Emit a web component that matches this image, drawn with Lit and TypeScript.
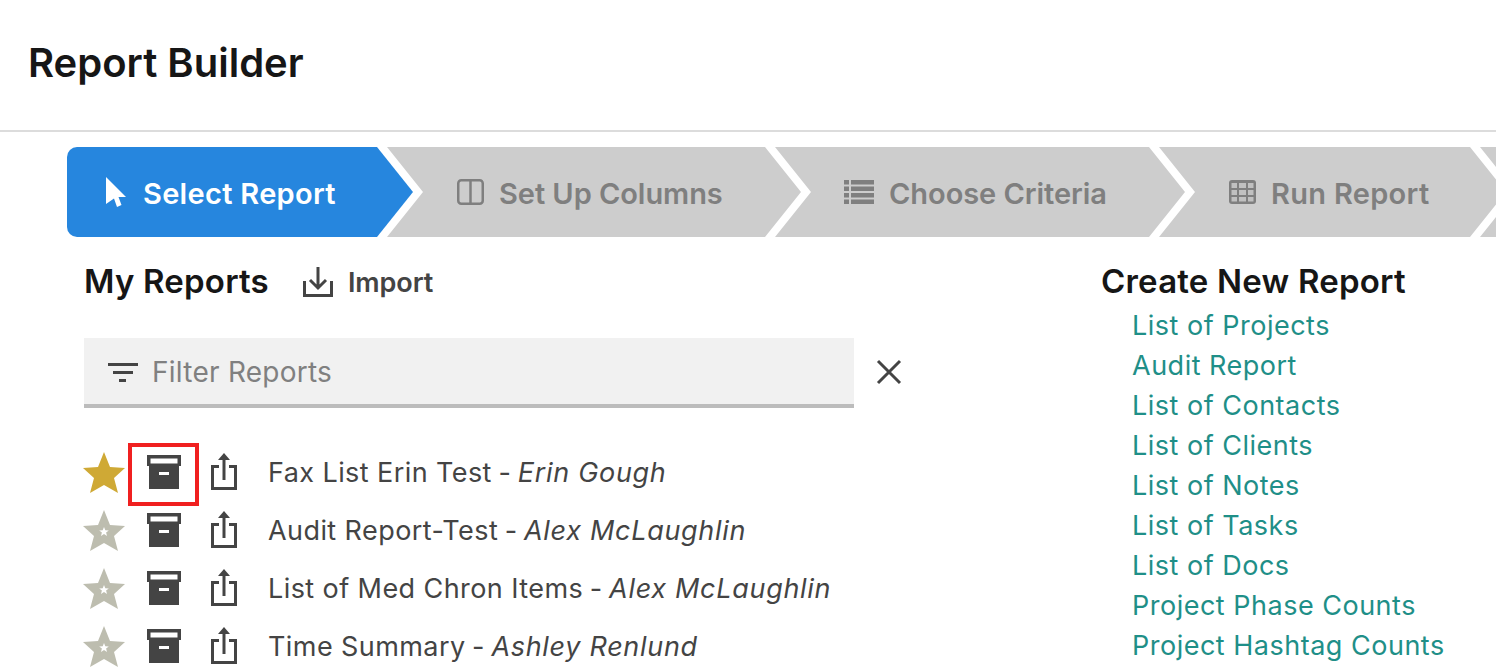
import { LitElement, html, css, svg } from "lit";
import { customElement } from "lit/decorators.js";

const STAR = "M21 0 L27 15 L42 16 L31 26 L35 41 L21 33 L7 41 L11 26 L0 16 L15 15 Z";

const star = (on: boolean) => html`<svg class="star" width="42" height="42" viewBox="0 0 42 42">
  <path d=${STAR} fill=${on ? "#cfa935" : "#bdbdaf"}></path>
  ${on ? null : svg`<path d="M21 17 L22.300 20.200 L25.800 20.400 L23.100 22.600 L24 26 L21 24.100 L18 26 L18.900 22.600 L16.200 20.400 L19.700 20.200 Z" fill="#fff"></path>`}
</svg>`;

const archive = html`<svg width="34" height="34" viewBox="0 0 34 34">
  <path fill="#444" fill-rule="evenodd" d="M0 0H34V11H32V34H2V11H0Z M3.500 3.500V8.500H30.500V3.500Z"></path>
  <rect x="12" y="17" width="10" height="3" fill="#fff"></rect>
</svg>`;

const share = html`<svg width="26" height="37" viewBox="0 0 26 37">
  <path fill="none" stroke="#444" stroke-width="3" d="M8 13.500H1.500V35.500H24.500V13.500H18"></path>
  <path fill="none" stroke="#444" stroke-width="3" d="M13 27V3"></path>
  <path fill="#444" d="M13 0L19 7H7Z"></path>
</svg>`;

const rows = [
  ["Fax List Erin Test", "Erin Gough", true],
  ["Audit Report-Test", "Alex McLaughlin", false],
  ["List of Med Chron Items", "Alex McLaughlin", false],
  ["Time Summary", "Ashley Renlund", false],
] as const;

const links = [
  "List of Projects", "Audit Report", "List of Contacts", "List of Clients", "List of Notes",
  "List of Tasks", "List of Docs", "Project Phase Counts", "Project Hashtag Counts",
];

@customElement("app-root")
export class AppRoot extends LitElement {
  static styles = css`
    :host {
      display: block;
      width: 1496px;
      height: 672px;
      overflow: hidden;
      background: #fff;
      font-family: Inter, "Liberation Sans", sans-serif;
      color: #444;
    }
    header {
      height: 132px;
      box-sizing: border-box;
      border-bottom: 2px solid #dcdcdc;
      padding-left: 28px;
      display: flex;
      align-items: center;
    }
    h1 {
      margin: -6px 0 0;
      font-size: 40px;
      font-weight: 600;
      letter-spacing: 0;
      color: #161616;
    }
    .steps {
      display: flex;
      margin: 15px 0 0 67px;
      height: 90px;
    }
    .step {
      flex: none;
      box-sizing: border-box;
      height: 90px;
      display: flex;
      align-items: center;
      background: #cdcdcd;
      color: #7f7f7f;
      font-size: 29px;
      font-weight: 600;
      letter-spacing: 0.3px;
      margin-right: -26px;
      clip-path: polygon(0 0, calc(100% - 36px) 0, 100% 50%, calc(100% - 36px) 100%, 0 100%, 36px 50%);
    }
    .step svg { flex: none; }
    .step span { margin-top: 2px; }
    .step.first {
      width: 346px;
      background: #2686de;
      color: #fff;
      border-radius: 10px 0 0 10px;
      padding-left: 39px;
      gap: 16px;
      clip-path: polygon(0 0, calc(100% - 36px) 0, 100% 50%, calc(100% - 36px) 100%, 0 100%);
    }
    .s2 { width: 414px; padding-left: 70px; gap: 15px; letter-spacing: -0.05px; }
    .s3 { width: 410px; padding-left: 69px; gap: 15px; letter-spacing: -0.05px; }
    .s4 { width: 347px; padding-left: 70px; gap: 15px; }
    .s5 { width: 200px; }
    .main {
      display: grid;
      grid-template-columns: 1017px 1fr;
      padding-left: 84px;
    }
    h2 {
      margin: 0;
      font-size: 33px;
      line-height: 40px;
      font-weight: 600;
      letter-spacing: 0.2px;
      color: #161616;
    }
    .title { display: flex; align-items: center; height: 40px; margin-top: 24px; }
    .import {
      display: flex;
      align-items: center;
      gap: 15px;
      margin: 2px 0 0 34px;
      font-size: 27px;
      font-weight: 600;
      letter-spacing: -0.1px;
      color: #444;
    }
    .filter-row { display: flex; align-items: center; margin-top: 37px; }
    .filter {
      width: 770px;
      height: 70px;
      box-sizing: border-box;
      background: #f1f1f1;
      border-bottom: 4px solid #bcbcbc;
      display: flex;
      align-items: center;
      gap: 14px;
      padding: 2px 0 0 24px;
      font-size: 28px;
      letter-spacing: 0.25px;
      color: #808080;
    }
    .clear { margin: -2px 0 0 22px; display: block; }
    .list { margin-top: 35px; }
    .row { display: flex; align-items: center; height: 58px; font-size: 27px; letter-spacing: 0.42px; color: #444; }
    .star { flex: none; margin: 2px 0 0 -1px; }
    .arch {
      position: relative;
      flex: none;
      display: flex;
      margin-left: 22px;
    }
    .mark::after {
      content: "";
      position: absolute;
      left: -19px;
      top: -12px;
      width: 71px;
      height: 63px;
      box-sizing: border-box;
      border: 4px solid #f02020;
    }
    .share { flex: none; display: flex; margin-left: 30px; margin-top: -1px; }
    .name { margin-left: 31px; white-space: pre; }
    .sep { word-spacing: -1.5px; }
    i { font-style: italic; letter-spacing: 0.7px; }
    .side { padding-top: 24px; }
    .side ul { list-style: none; margin: 5px 0 0; padding: 0 0 0 31px; }
    .side li {
      height: 40px;
      line-height: 40px;
      font-size: 27px;
      letter-spacing: 0.5px;
      color: #1f8f88;
      white-space: nowrap;
    }
  `;

  render() {
    return html`
      <header><h1>Report Builder</h1></header>
      <div class="steps">
        <div class="step first">
          <svg width="21" height="30" viewBox="0 0 21 30"><path fill="#fff" d="M0 0L20 20H12.500L15.500 28L11 30L8 21.500L0 27Z"></path></svg>
          <span>Select Report</span>
        </div>
        <div class="step s2">
          <svg width="27" height="26" viewBox="0 0 27 26"><rect x="1.250" y="1.250" width="24.500" height="23.500" rx="3" fill="none" stroke="#7f7f7f" stroke-width="2.500"></rect><path d="M13.500 1.500V24.500" stroke="#7f7f7f" stroke-width="2.500"></path></svg>
          <span>Set Up Columns</span>
        </div>
        <div class="step s3">
          <svg width="30" height="24" viewBox="0 0 30 24"><path fill="#7f7f7f" d="M0 0H5V4.500H0ZM7 0H30V4.500H7ZM0 6.500H5V11H0ZM7 6.500H30V11H7ZM0 13H5V17.500H0ZM7 13H30V17.500H7ZM0 19.500H5V24H0ZM7 19.500H30V24H7Z"></path></svg>
          <span>Choose Criteria</span>
        </div>
        <div class="step s4">
          <svg width="27" height="24" viewBox="0 0 27 24"><rect width="27" height="24" rx="3" fill="#7f7f7f"></rect><path fill="#c0c0c0" d="M2.500 3H8V8H2.500ZM10 3H17V8H10ZM19 3H24.500V8H19ZM2.500 10H8V15H2.500ZM10 10H17V15H10ZM19 10H24.500V15H19ZM2.500 17H8V21.500H2.500ZM10 17H17V21.500H10ZM19 17H24.500V21.500H19Z"></path></svg>
          <span>Run Report</span>
        </div>
        <div class="step s5"></div>
      </div>
      <div class="main">
        <section>
          <div class="title">
            <h2>My Reports</h2>
            <span class="import">
              <svg width="30" height="30" viewBox="0 0 30 30"><path fill="none" stroke="#444" stroke-width="3" d="M1.500 14V28.500H28.500V14M15 0V20M7 13L15 21L23 13"></path></svg>
              Import
            </span>
          </div>
          <div class="filter-row">
            <div class="filter">
              <svg width="30" height="22" viewBox="0 0 30 22"><path fill="#444" d="M0 2H30V5H0ZM5 10H25V13H5ZM11 18H18V21H11Z"></path></svg>
              <span>Filter Reports</span>
            </div>
            <svg class="clear" width="26" height="26" viewBox="0 0 26 26"><path stroke="#444" stroke-width="3" d="M2 2L24 24M24 2L2 24"></path></svg>
          </div>
          <div class="list">
            ${rows.map(([n, a, on]) => html`
              <div class="row">
                ${star(on)}
                <span class="arch ${on ? "mark" : ""}">${archive}</span>
                <span class="share">${share}</span>
                <span class="name">${n}<span class="sep"> - </span><i>${a}</i></span>
              </div>`)}
          </div>
        </section>
        <aside class="side">
          <h2>Create New Report</h2>
          <ul>${links.map((l) => html`<li>${l}</li>`)}</ul>
        </aside>
      </div>
    `;
  }
}
